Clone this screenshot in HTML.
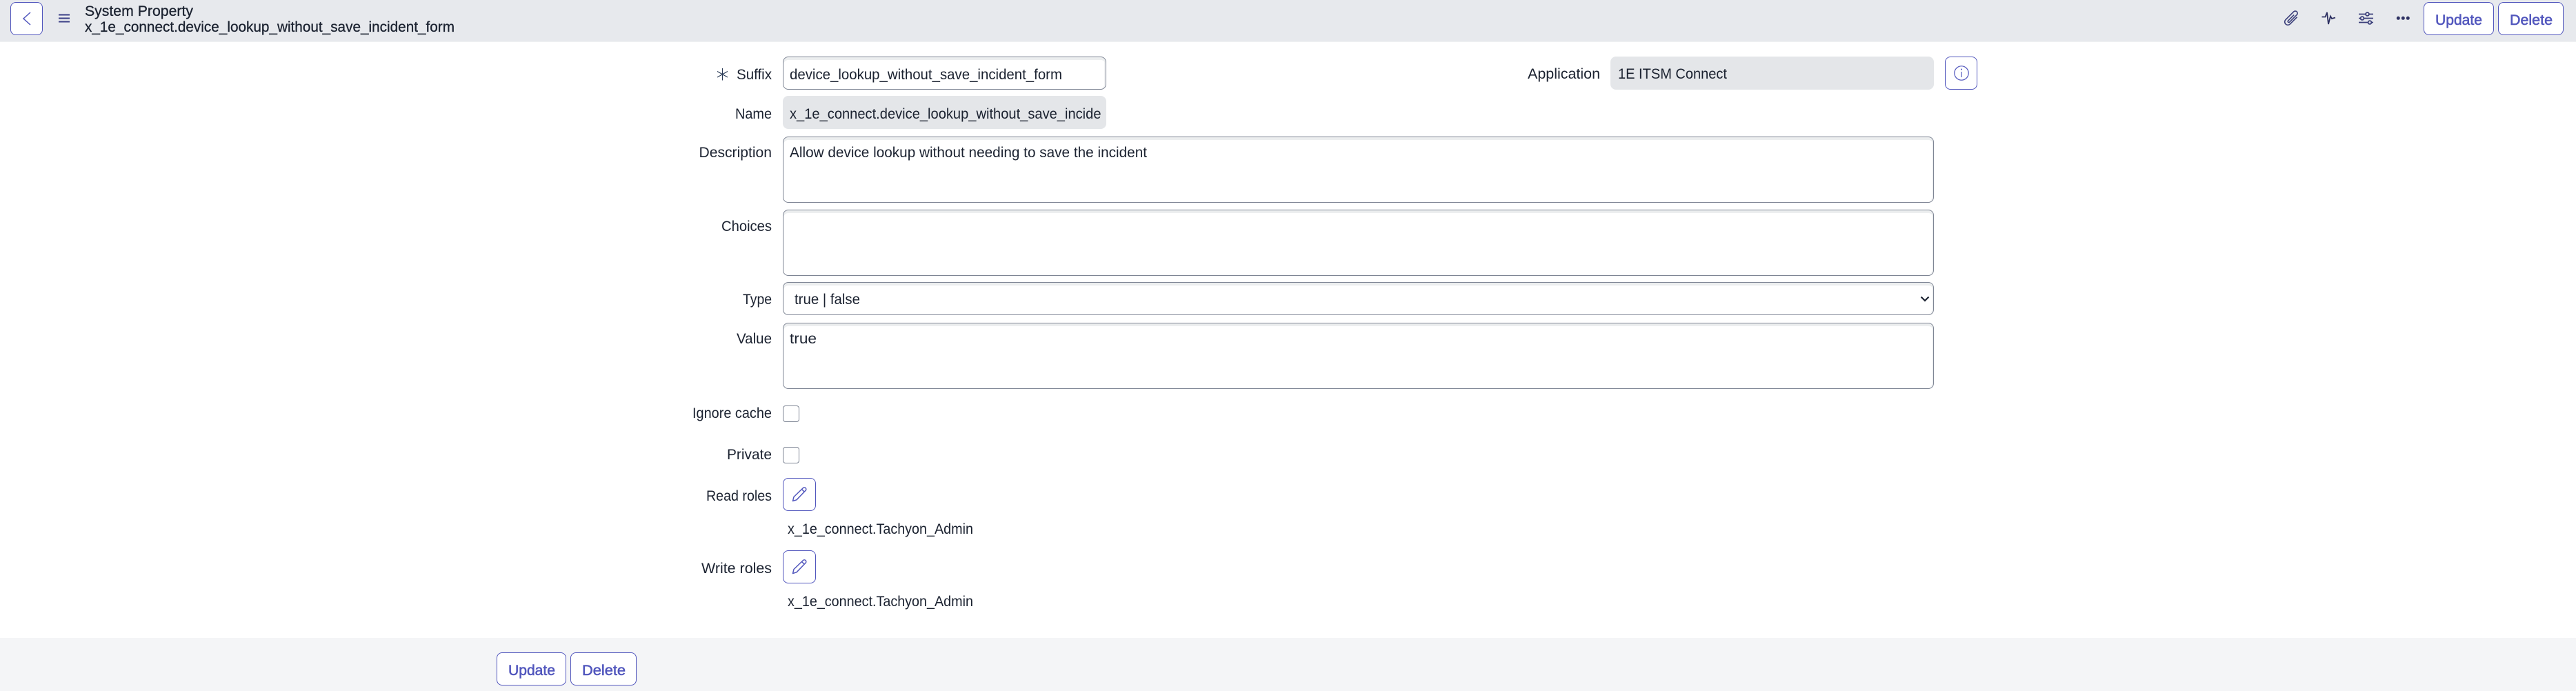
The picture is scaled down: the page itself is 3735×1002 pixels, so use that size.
<!DOCTYPE html>
<html lang="en">
<head>
<meta charset="utf-8">
<title>System Property</title>
<style>
html,body{margin:0;padding:0;width:3735px;height:1002px;overflow:hidden;background:#fff}
.b{position:absolute;box-sizing:border-box}
.hdr{left:0;top:0;width:3735px;height:60px;background:#e7e9ed}
.hl{left:0;top:60px;width:3735px;height:1px;background:#f0f1f3}
.ftr{left:0;top:925px;width:3735px;height:77px;background:#f4f5f7}
.btn{background:#fff;border:1px solid #5156bd;border-radius:8px;height:48px}
.in{background:#fff;border:1px solid #7e8594;border-radius:8px;box-shadow:inset 0 4px 0 #eceeef,inset -2px 0 0 #f3f4f5}
.ro{background:#e4e6e9;border-radius:8px}
.cb{background:#fff;border:1px solid #7e8594;border-radius:4px;width:24px;height:24px}
svg{position:absolute;left:0;top:0}
text{font-family:"Liberation Sans",sans-serif;font-size:21px;fill:#1b2230}
.t{stroke:#1b2230;stroke-width:.3px}
.s{fill:#5156bd;stroke:#5156bd;stroke-width:.55px}
</style>
</head>
<body>
<div class="b hdr"></div>
<div class="b hl"></div>
<div class="b ftr"></div>

<div class="b btn" style="left:15px;top:3px;width:47px"></div>
<div class="b btn" style="left:3514px;top:3px;width:102px"></div>
<div class="b btn" style="left:3622px;top:3px;width:95px"></div>

<div class="b in" style="left:1135px;top:82px;width:469px;height:48px"></div>
<div class="b ro" style="left:1135px;top:139px;width:469px;height:48px"></div>
<div class="b in" style="left:1135px;top:198px;width:1669px;height:96px"></div>
<div class="b in" style="left:1135px;top:304px;width:1669px;height:96px"></div>
<div class="b in" style="left:1135px;top:409px;width:1669px;height:48px"></div>
<div class="b in" style="left:1135px;top:468px;width:1669px;height:96px"></div>
<div class="b cb" style="left:1135px;top:588px"></div>
<div class="b cb" style="left:1135px;top:648px"></div>
<div class="b ro" style="left:2335px;top:82px;width:469px;height:48px"></div>
<div class="b btn" style="left:2820px;top:82px;width:47px"></div>
<div class="b btn" style="left:1135px;top:693px;width:48px"></div>
<div class="b btn" style="left:1135px;top:798px;width:48px"></div>
<div class="b btn" style="left:720px;top:946px;width:101px"></div>
<div class="b btn" style="left:827px;top:946px;width:96px"></div>

<svg width="3735" height="1002" viewBox="0 0 3735 1002" xmlns="http://www.w3.org/2000/svg">
  <!-- header -->
  <path d="M44 18 L34 27 L44 36" fill="none" stroke="#5156bd" stroke-width="1.5"/>
  <path d="M85 21.5H101M85 26.5H101M85 31.5H101" stroke="#3b3f86" stroke-width="2"/>
  <text class="t" x="123" y="23" textLength="157" lengthAdjust="spacingAndGlyphs">System Property</text>
  <text class="t" x="123" y="46" textLength="536" lengthAdjust="spacingAndGlyphs">x_1e_connect.device_lookup_without_save_incident_form</text>

  <g transform="translate(3322.5 26.5) rotate(45)" fill="none" stroke="#3b3f7a" stroke-width="1.6">
    <path d="M4.5 -7 V7.5 a4.5 4.5 0 0 1 -9 0 V-9 a3.2 3.2 0 0 1 6.4 0 V6 a1.4 1.4 0 0 1 -2.8 0 V-6"/>
  </g>
  <path d="M3366.5 24.5H3371.5L3374 18L3376 35L3379 23.5L3381 27L3386 25.5" fill="none" stroke="#2f3263" stroke-width="1.8"/>
  <g stroke="#3b3f7a" stroke-width="1.8" fill="#e7e9ed">
    <path d="M3420 20.5H3441M3420 26.5H3441M3420 32.5H3441"/>
    <circle cx="3432.5" cy="20.5" r="2.4"/>
    <circle cx="3425" cy="26.5" r="2.4"/>
    <circle cx="3436" cy="32.5" r="2.4"/>
  </g>
  <g fill="#2f3263">
    <circle cx="3477.3" cy="26.3" r="2.5"/><circle cx="3484.3" cy="26.3" r="2.5"/><circle cx="3491.3" cy="26.3" r="2.5"/>
  </g>
  <text class="s" x="3531" y="36" textLength="68" lengthAdjust="spacingAndGlyphs">Update</text>
  <text class="s" x="3639" y="36" textLength="62" lengthAdjust="spacingAndGlyphs">Delete</text>

  <!-- labels -->
  <path d="M1047.5 99V116.5M1040 103.5L1055 112M1040 112L1055 103.5" stroke="#2c3c57" stroke-width="1.2" fill="none"/>
  <text x="1068" y="115" textLength="51" lengthAdjust="spacingAndGlyphs">Suffix</text>
  <text x="1066" y="172" textLength="53" lengthAdjust="spacingAndGlyphs">Name</text>
  <text x="1013.5" y="228" textLength="105.5" lengthAdjust="spacingAndGlyphs">Description</text>
  <text x="1046" y="335" textLength="73" lengthAdjust="spacingAndGlyphs">Choices</text>
  <text x="1077" y="441" textLength="42" lengthAdjust="spacingAndGlyphs">Type</text>
  <text x="1068" y="498" textLength="51" lengthAdjust="spacingAndGlyphs">Value</text>
  <text x="1004" y="606" textLength="115" lengthAdjust="spacingAndGlyphs">Ignore cache</text>
  <text x="1054" y="666" textLength="65" lengthAdjust="spacingAndGlyphs">Private</text>
  <text x="1024" y="726" textLength="95" lengthAdjust="spacingAndGlyphs">Read roles</text>
  <text x="1017" y="831" textLength="102" lengthAdjust="spacingAndGlyphs">Write roles</text>
  <text x="2215" y="114" textLength="105" lengthAdjust="spacingAndGlyphs">Application</text>

  <!-- values -->
  <text x="1145" y="115" textLength="395" lengthAdjust="spacingAndGlyphs">device_lookup_without_save_incident_form</text>
  <text x="1145" y="172" textLength="451.5" lengthAdjust="spacingAndGlyphs">x_1e_connect.device_lookup_without_save_incide</text>
  <text x="1145" y="228" textLength="518" lengthAdjust="spacingAndGlyphs">Allow device lookup without needing to save the incident</text>
  <text x="1152" y="441" textLength="95" lengthAdjust="spacingAndGlyphs">true | false</text>
  <text x="1145" y="498" textLength="39" lengthAdjust="spacingAndGlyphs">true</text>
  <text x="2346" y="114" textLength="158" lengthAdjust="spacingAndGlyphs">1E ITSM Connect</text>
  <text x="1142" y="774" textLength="269" lengthAdjust="spacingAndGlyphs">x_1e_connect.Tachyon_Admin</text>
  <text x="1142" y="879" textLength="269" lengthAdjust="spacingAndGlyphs">x_1e_connect.Tachyon_Admin</text>

  <!-- chevron select -->
  <path d="M2785.5 430.5L2791 436L2796.5 430.5" fill="none" stroke="#1b2230" stroke-width="2.2"/>

  <!-- info -->
  <circle cx="2844" cy="106" r="10.2" fill="none" stroke="#5156bd" stroke-width="1.2"/>
  <path d="M2844 104V112" stroke="#5156bd" stroke-width="1.2"/>
  <circle cx="2844" cy="100.5" r="1" fill="#5156bd"/>

  <!-- pencils -->
  <g fill="none" stroke="#5156bd" stroke-width="1.5" stroke-linejoin="round">
    <path d="M1149.5 726.5L1151 720.5L1164.5 707.5A2.6 2.6 0 0 1 1168.3 711L1155 724.8Z"/>
    <path d="M1162.5 709.5L1166.3 713.2"/>
    <path d="M1149.5 831.5L1151 825.5L1164.5 812.5A2.6 2.6 0 0 1 1168.3 816L1155 829.8Z"/>
    <path d="M1162.5 814.5L1166.3 818.2"/>
  </g>

  <!-- footer -->
  <text class="s" x="737" y="979" textLength="68" lengthAdjust="spacingAndGlyphs">Update</text>
  <text class="s" x="844" y="979" textLength="63" lengthAdjust="spacingAndGlyphs">Delete</text>
</svg>
</body>
</html>
